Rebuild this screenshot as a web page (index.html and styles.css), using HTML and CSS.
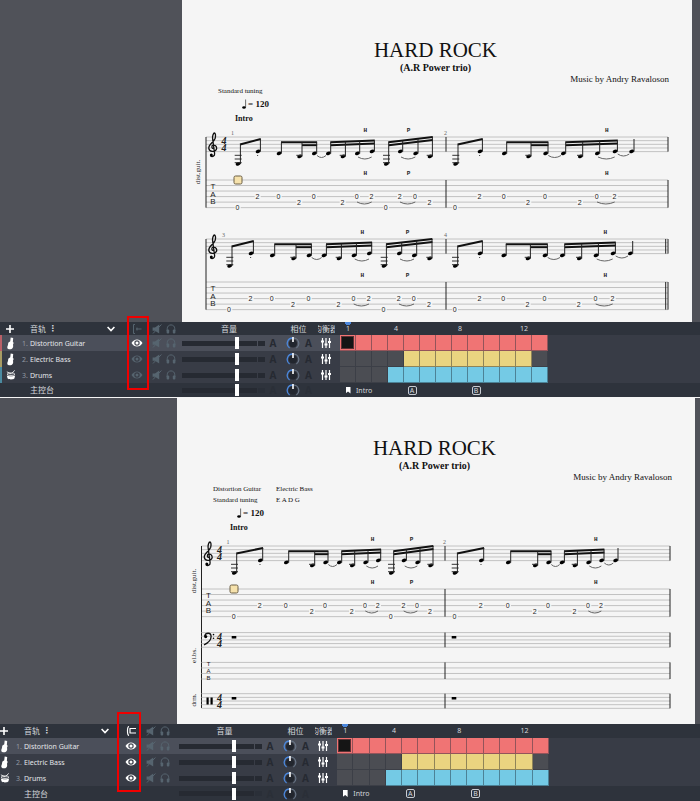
FILE: index.html
```html
<!DOCTYPE html>
<html lang="zh-CN">
<head>
  <meta charset="UTF-8">
  <meta name="viewport" content="width=device-width, initial-scale=1.0">
  <title>HARD ROCK</title>
  <link rel="stylesheet" href="styles.css">
</head>
<body>
  <!-- Icon sprite -->
  <svg class="sprite" aria-hidden="true">
    <symbol id="guitar" viewBox="0 0 10 14">
      <path d="M5.2 .4L8 .9 7.6 5.1C9 6 8.3 7.3 7.7 8.4 8.6 10.8 7.4 13.4 4.3 13.5 1.4 13.5 .8 11.1 2 9.1 2.6 8 2 6.8 3 5.6 3.8 5 4.5 5 4.7 4.4z"/>
    </symbol>
    <symbol id="drums" viewBox="0 0 12 12">
      <path d="M1 6.2C3 7.8 9 7.8 11 6.2L10.2 10C9 11.9 3 11.9 1.8 10z"/>
      <ellipse cx="6" cy="5" rx="4.6" ry="1.5" fill="none" stroke="currentColor"/>
      <path d="M1 2.2L6 4.6M10.5 .5L6.5 4.4" fill="none" stroke="currentColor"/>
    </symbol>
    <symbol id="eye" viewBox="0 0 12 8">
      <path fill-rule="evenodd" d="M.5 4C3.2-.7 8.8-.7 11.5 4 8.8 8.7 3.2 8.7.5 4zM6 1.3A2.7 2.7 0 1 0 6 6.7 2.7 2.7 0 1 0 6 1.3z"/>
      <circle cx="6" cy="4" r="1.5"/>
    </symbol>
    <symbol id="mute" viewBox="0 0 10 10">
      <path d="M.6 3.4H3L7.2.6V9.5L3 6.8H.6z"/>
      <path d="M9.4.5L1 9.5" fill="none" stroke="currentColor"/>
    </symbol>
    <symbol id="phones" viewBox="0 0 10 10">
      <path d="M1.2 7V4.8C1.2-.4 8.8-.4 8.8 4.8V7" fill="none" stroke="currentColor"/>
      <rect x=".6" y="5.5" width="2.6" height="4" rx="1"/>
      <rect x="6.8" y="5.5" width="2.6" height="4" rx="1"/>
    </symbol>
    <symbol id="eq" viewBox="0 0 10 10">
      <path d="M1.5 0V10M5 0V10M8.5 0V10" fill="none" stroke="currentColor" stroke-width="1.2"/>
      <path d="M0 2.5H3V4.5H0zM3.5 5.5H6.5V7.5H3.5zM7 3H10V5H7z"/>
    </symbol>
    <symbol id="knob" viewBox="0 0 14 12">
      <circle cx="7" cy="6.5" r="4" fill="#22262e"/>
      <path d="M3.6 11A5.5 5.5 0 0 1 7 1" fill="none" stroke="#4b87dc" stroke-width="1.3"/>
      <path d="M7 1A5.5 5.5 0 0 1 10.4 11" fill="none" stroke="#687485" stroke-width="1.2"/>
      <path d="M7 0V5" stroke="#fff" stroke-width="1.6"/>
    </symbol>
    <symbol id="single" viewBox="0 0 10 10">
      <path d="M3 .5H1.5V9.5H3M4 5H9.5M5 3.5V6.5" fill="none" stroke="currentColor"/>
    </symbol>
    <symbol id="multi" viewBox="0 0 10 10">
      <path d="M3 .5C1 1 1 9 3 9.5M3.500 2.500H10M3.500 7H10M4 2.500V7" fill="none" stroke="currentColor" stroke-width="1.2"/>
    </symbol>
    <symbol id="plus" viewBox="0 0 8 8">
      <path d="M4 0V8M0 4H8" stroke="currentColor" stroke-width="1.6"/>
    </symbol>
    <symbol id="chevron" viewBox="0 0 8 6">
      <path d="M.6 1L4 4.6 7.4 1" fill="none" stroke="currentColor" stroke-width="1.6"/>
    </symbol>
    <symbol id="quarter" viewBox="0 0 6 10">
      <ellipse cx="2" cy="8.5" rx="1.8" ry="1.2"/>
      <path d="M3.6 8.5V.5" stroke="currentColor" stroke-width=".6"/>
    </symbol>
  </svg>

  <section class="view">
    <div class="workspace">
      <article class="sheet">
        <header class="sheet-header">
          <h1>HARD ROCK</h1>
          <h2>(A.R Power trio)</h2>
          <p class="composer">Music by Andry Ravaloson</p>
          <div class="tunings"><p>Standard tuning</p></div>
          <p class="tempo"><svg class="quarter"><use href="#quarter"/></svg>= 120</p>
          <h3>Intro</h3>
        </header>
        <svg class="system" data-system="first" viewBox="0 0 510 102"></svg>
        <svg class="system" data-system="second" viewBox="0 0 510 97"></svg>
      </article>
    </div>
    <div class="mixer" data-multi="false"></div>
  </section>

  <section class="view view-multi">
    <div class="workspace">
      <article class="sheet">
        <header class="sheet-header">
          <h1>HARD ROCK</h1>
          <h2>(A.R Power trio)</h2>
          <p class="composer">Music by Andry Ravaloson</p>
          <div class="tunings">
            <p>Distortion Guitar</p><p>Electric Bass</p>
            <p>Standard tuning</p><p>E A D G</p>
          </div>
          <p class="tempo"><svg class="quarter"><use href="#quarter"/></svg>= 120</p>
          <h3>Intro</h3>
        </header>
        <svg class="system" data-system="full" viewBox="0 0 518 192"></svg>
      </article>
    </div>
    <div class="mixer" data-multi="true"></div>
  </section>

  <script src="script.js"></script>
</body>
</html>
```

FILE: styles.css
```css
:root {
  --workspace: #505259;
  --sheet: #f5f5f5;
  --bar: #2e333c;
  --row: #383c46;
  --row-active: #4b4f5a;
  --slot: #4b4d53;
  --red: #f07474;
  --yellow: #ead480;
  --blue: #74cae5;
  --muted: #56646f;
  --ui-text: #d5d8dc;
}

* {
  box-sizing: border-box;
  margin: 0;
  padding: 0;
}

body {
  background: var(--sheet);
  font-family: "Noto Sans", "Noto Sans CJK SC", sans-serif;
}

button {
  display: flex;
  align-items: center;
  justify-content: center;
  border: none;
  background: none;
  color: inherit;
  font: inherit;
}

.sprite {
  display: none;
}

/* Score */
.view {
  padding-bottom: 1px;
}

.view-multi {
  padding-bottom: 0;
}

.workspace {
  padding: 0 8px 0 182px;
  background: var(--workspace);
}

.view-multi .workspace {
  padding: 0 5px 0 177px;
}

.sheet {
  background: var(--sheet);
  color: #111;
  font-family: "Liberation Serif", serif;
}

.sheet-header {
  padding: 38px 23px 0 20px;
}

.sheet-header h1 {
  font-size: 21px;
  font-weight: normal;
  line-height: 24px;
  text-align: center;
}

.sheet-header h2 {
  font-size: 10px;
  line-height: 12px;
  text-align: center;
}

.composer {
  font-size: 9px;
  line-height: 10px;
  text-align: right;
}

.tunings {
  display: grid;
  grid-template-columns: 63px 1fr;
  margin: 2px 0 0 16px;
  font-size: 7px;
  line-height: 11px;
}

.tempo {
  display: flex;
  margin-left: 40px;
  padding-top: 2px;
  font-size: 9px;
  font-weight: bold;
  line-height: 10px;
}

.quarter {
  width: 6px;
  height: 10px;
}

.sheet-header h3 {
  margin-left: 33px;
  padding-top: 6px;
  font-size: 8px;
  line-height: 8px;
}

.system {
  display: block;
  width: 100%;
}

.system text {
  font-family: "Liberation Serif", serif;
  font-size: 7px;
  fill: #222;
}

.system .digit,
.system .tab-letter {
  font-family: "Liberation Sans", sans-serif;
  text-anchor: middle;
}

.system .tab-letter {
  font-size: 8px;
}

.system .tab-letter.small {
  font-size: 6px;
}

.system .meter {
  font-size: 10px;
  font-style: italic;
  font-weight: bold;
  text-anchor: middle;
}

.system .technique {
  font-family: "Liberation Mono", monospace;
  font-size: 6px;
  font-weight: bold;
  text-anchor: middle;
}

.system .number {
  font-size: 6px;
  fill: #666;
}

.system .label {
  text-anchor: middle;
}

.staff-line {
  stroke: #c2c2c2;
  stroke-width: 1;
}

.bar-line,
.stem {
  stroke: #222;
  stroke-width: 1;
}

.beam {
  stroke: #111;
  stroke-width: 2;
}

.ledger {
  stroke: #333;
  stroke-width: 1;
}

.tie {
  fill: none;
  stroke: #666;
  stroke-width: 1;
}

.clef {
  fill: none;
  stroke: #111;
  stroke-width: 1.3;
}

/* Mixer */
.mixer {
  position: relative;
  display: flex;
  background: var(--row);
  color: var(--ui-text);
  font-size: 7px;
}

.channels {
  flex: none;
  width: 340px;
}

.view-multi .channels {
  width: 343px;
  margin-left: -6px;
}

.channel {
  display: grid;
  grid-template-columns: 19px 105px 26px 13px 16px 1fr 16px 24px 7px 28px;
  align-items: center;
  height: 16px;
  background: var(--row);
}

.channel > * {
  justify-self: center;
}

.channel.active {
  background: var(--row-active);
}

.channel.head,
.ruler {
  height: 13px;
  background: var(--bar);
}

.view-multi .channel.head,
.view-multi .ruler {
  height: 14px;
}

.channel.master,
.markers {
  height: 14px;
  background: var(--bar);
}

.view-multi .channel.master,
.view-multi .markers {
  height: 15px;
}

.channel .instrument {
  display: flex;
  align-items: center;
  justify-content: center;
  justify-self: stretch;
  height: 100%;
  border-left: 2px solid var(--bar);
  color: #fff;
}

.instrument.red { border-color: #b96068; }
.instrument.yellow { border-color: #a99c63; }
.instrument.blue { border-color: #4b8ba1; }

.channel .name {
  display: flex;
  align-items: center;
  justify-self: stretch;
  padding-left: 3px;
}

.name .index {
  width: 8px;
  color: #949aa3;
}

.name .title {
  color: #e4e6e9;
}

.channel .name.cjk,
.head-label {
  font-size: 8px;
  line-height: 12px;
}

.channel .name.cjk {
  padding: 0 9px 0 11px;
}

.name .more {
  margin: 0 auto 0 3px;
  font-family: "DejaVu Sans", sans-serif;
  font-weight: bold;
}

.icon {
  display: block;
  width: 10px;
  height: 10px;
  fill: currentColor;
}

.icon.guitar {
  width: 9px;
  height: 13px;
}

.icon.eye {
  width: 12px;
  height: 8px;
}

.icon.knob {
  width: 14px;
  height: 12px;
}

.icon.plus,
.icon.chevron {
  width: 8px;
  height: 8px;
}

.muted {
  color: var(--muted);
}

.lit {
  color: #fff;
}

.channel .volume {
  display: flex;
  align-items: center;
  justify-self: end;
  gap: 1px;
  width: 83px;
}

.volume input {
  width: 75px;
  height: 12px;
  appearance: none;
  background: linear-gradient(#262a32, #262a32) center / 100% 5px no-repeat;
}

.volume input::-webkit-slider-thumb {
  appearance: none;
  width: 4px;
  height: 12px;
  background: #fff;
}

.volume .peak {
  width: 7px;
  height: 5px;
  background: #262a32;
}

.auto {
  color: #262a32;
  font-size: 10px;
  font-weight: bold;
  line-height: 12px;
}

.master .auto,
.master .peak {
  opacity: 0.4;
}

.head-label.level {
  padding-left: 14px;
}

.head-label.pan {
  grid-column: 8 / 10;
  padding-left: 4px;
  white-space: nowrap;
}

.head-label.eq-label {
  display: flex;
  justify-content: center;
  width: 17px;
  overflow: hidden;
  white-space: nowrap;
}

/* Timeline */
.timeline {
  flex: 1;
  min-width: 0;
  --bars-width: 208px;
}

.view-multi .timeline {
  --bars-width: 212px;
}

.ruler,
.markers,
.bars {
  display: grid;
  grid-template-columns: repeat(13, calc(var(--bars-width) / 13));
  align-items: center;
}

.ruler span {
  height: 100%;
  line-height: 13px;
  text-align: center;
}

/* Playhead */
.ruler span:first-child {
  background: radial-gradient(circle at top, #4b87dc 3px, transparent 3px);
}

.bars {
  height: 16px;
  align-items: stretch;
}

.bars span {
  border: solid #3c3f47;
  border-width: 0 1px 1px 0;
  background: var(--slot);
}

.bars.red .on { background: var(--red); border-color: #93545a; }
.bars.yellow .on { background: var(--yellow); border-color: #8f8458; }
.bars.blue .on { background: var(--blue); border-color: #4c8296; }

.bars .current {
  display: flex;
  align-items: center;
  justify-content: center;
}

.bars .current::before {
  content: "";
  width: 11px;
  height: 11px;
  border: 1px solid #5c3033;
  background: #151515;
}

.markers {
  justify-items: center;
}

.markers .flag {
  width: 5px;
  height: 7px;
  background: #fff;
  clip-path: polygon(0 0, 100% 0, 100% 100%, 50% 70%, 0 100%);
}

.markers .section {
  grid-column: 2 / 4;
  justify-self: start;
}

.markers .letter {
  width: 9px;
  height: 9px;
  border: 1px solid #c8ccd2;
  border-radius: 2px;
  line-height: 7px;
  text-align: center;
}

.markers .letter.a { grid-column: 5; }
.markers .letter.b { grid-column: 9; }

/* Red frame laid over the visibility column */
.highlight {
  position: absolute;
  top: -6px;
  left: 127px;
  width: 22px;
  height: 74px;
  border: 2px solid #f00000;
  pointer-events: none;
}

.view-multi .highlight {
  top: -12px;
  left: 117px;
  width: 24px;
  height: 80px;
}
```

FILE: script.js
```js
const LINE = 3.66;   // gap between staff lines
const TAB_LINE = 5.53; // gap between tab lines
const TOP = 14;      // first staff line
const TAB = 43;      // tab offset from the first staff line

// Heads: [height below the first staff line, tab row, fret]
const LOW = [27, 5, 0];
const MID = [14.6, 3, 2];
const OPEN = [16.6, 3, 0];
const DOWN = [19.6, 4, 2];
const TIED = [16.6];
const END = [14.6];
const RIFF = [LOW, MID, OPEN, DOWN, OPEN, TIED, DOWN, OPEN, MID, LOW, MID, OPEN, DOWN];
const RIFF_END = [LOW, MID, OPEN, DOWN, OPEN, TIED, DOWN, OPEN, MID, END];

const systems = {
  first: {
    left: 24, bars: [264, 486], number: 1, meter: true, cursor: 56, label: true,
    measures: [
      [55.7, 75.7, 96.7, 117.3, 132, 146, 160.7, 175, 189.7, 204, 218, 233.3, 247.7],
      [273.3, 297.7, 322, 346.3, 363.3, 381, 398, 415, 432.7, 449.3]
    ]
  },
  second: {
    left: 24, bars: [264, 486], number: 3, double: true,
    measures: [
      [47.3, 68.7, 90, 111.3, 126.7, 141.7, 156.7, 171.7, 187, 201.7, 217, 232, 247.3],
      [273, 297.7, 321.5, 345.7, 362.7, 380, 397, 413.7, 430.7, 448]
    ]
  },
  full: {
    left: 24.5, bars: [268, 493], number: 1, meter: true, cursor: 57, label: true, band: true,
    measures: [
      [57, 83, 109, 135, 148.3, 162, 175, 188.3, 201, 214, 226.7, 240.3, 253.3],
      [277.7, 304, 331, 358, 371.3, 384.7, 397.7, 411.3, 424.3, 438.3]
    ]
  }
};

function line(cls, x1, y1, x2, y2) {
  return `<line class="${cls}" x1="${x1}" y1="${y1}" x2="${x2}" y2="${y2}"/>`;
}

function text(cls, x, y, value) {
  return `<text class="${cls}" x="${x}" y="${y}">${value}</text>`;
}

function staff(s, y, count, gap) {
  let out = '';
  for (let i = 0; i < count; i++) {
    const ly = y + i * gap;
    out += line('staff-line', s.left, ly, s.bars[1], ly);
  }
  const end = y + (count - 1) * gap;
  s.bars.forEach(x => out += line('bar-line', x, y, x, end));
  if (s.double) out += line('bar-line', s.bars[1] - 2.3, y, s.bars[1] - 2.3, end);
  return out;
}

function tie(x1, x2, y) {
  return `<path class="tie" d="M${x1} ${y}Q${(x1 + x2) / 2} ${y + 4} ${x2} ${y}"/>`;
}

// Beam from stem a to stem b, with the stems between them
function beamGroup(xs, notes, a, b, y1, y2, secondFrom) {
  const start = xs[a] + 2.7;
  const end = xs[b] + 2.7;
  const at = x => TOP + y1 + (y2 - y1) * (x - start) / (end - start);
  let out = line('beam', start - 0.4, at(start), end + 0.4, at(end));
  if (secondFrom !== undefined) {
    const x = xs[secondFrom] + 2.7;
    out += line('beam', x, at(x) + 2.9, end + 0.4, at(end) + 2.9);
  }
  for (let i = a; i <= b; i++) {
    const x = xs[i] + 2.7;
    out += line('stem', x, at(x), x, TOP + notes[i][0]);
  }
  return out;
}

function measure(xs, notes) {
  let out = '';
  notes.forEach(([height, row, fret], i) => {
    const x = xs[i];
    const y = TOP + height;
    out += `<ellipse cx="${x + 0.4}" cy="${y}" rx="2.5" ry="1.7" transform="rotate(-20 ${x} ${y})"/>`;
    if (height === 27) {
      [18.3, 22, 25.7].forEach(l => out += line('ledger', x - 3, TOP + l, x + 4, TOP + l));
    }
    if (height === 19.6) out += line('ledger', x - 3, TOP + 18.3, x + 3, TOP + 18.3);
    if (row !== undefined) {
      const ty = TOP + TAB + row * TAB_LINE;
      out += `<rect x="${x - 3}" y="${ty - 2}" width="6" height="4" fill="#f5f5f5"/>`;
      out += text('digit', x - 0.3, ty + 2.5, fret);
    }
  });
  out += `<circle cx="${xs[1]}" cy="${TOP + 18.6}" r=".5"/>`;
  out += beamGroup(xs, notes, 0, 1, 7.5, 2);
  out += beamGroup(xs, notes, 2, 4, 5.3, 5.3, 3);
  out += beamGroup(xs, notes, 5, 8, 5.3, 3.6, 5);
  out += tie(xs[4] + 3, xs[5] - 2, TOP + 18.5);
  out += tie(xs[7] + 1, xs[8], TOP + 20);
  out += tie(xs[7], xs[8], TOP + 65);
  out += techniques((xs[7] + xs[8]) / 2 + 1, 'H');
  if (notes.length > 10) {
    out += beamGroup(xs, notes, 9, 12, 5.3, 0, 9);
    out += tie(xs[10] + 1, xs[11], TOP + 20);
    out += tie(xs[10], xs[11], TOP + 65);
    out += techniques((xs[10] + xs[11]) / 2 + 1, 'P');
  } else {
    out += line('stem', xs[9] + 2.7, TOP + 2, xs[9] + 2.7, TOP + 14.6);
    out += tie(xs[8] + 3, xs[9] - 2, TOP + 17);
  }
  return out;
}

function techniques(x, letter) {
  return text('technique', x, TOP - 4.6, letter) + text('technique', x, TOP + 38.4, letter);
}

function trebleClef(x, y) {
  return `<g transform="translate(${x} ${y})">
    <path class="clef" d="M.9 11.6C-1.6 11.8-1.9 8.6 .3 8.2 3.2 7.8 4.3 11 3.3 12.7 1.8 15.2-3.6 15-4.2 11.3-4.7 7.4 .9 5.2 2.2 1.2 2.9-1.5 2.4-3.8 1.5-4 .2-4-.7-.6-.4 1.6L1.6 16.5C2 19-.8 20.4-2.4 18.8"/>
    <circle cx="-1.7" cy="18" r="1.5"/>
  </g>`;
}

function bassClef(x, y) {
  return `<g transform="translate(${x} ${y})">
    <path class="clef" d="M-3.8 3.5C-3-.2 2.6-.6 2.6 4 2.6 8-.5 10.5-4.5 12.3"/>
    <circle cx="-2.8" cy="4" r="1.6"/><circle cx="5" cy="2" r=".8"/><circle cx="5" cy="5.6" r=".8"/>
  </g>`;
}

function meter(x, y) {
  return text('meter', x, y + 7, 4) + text('meter', x, y + 14.4, 4);
}

function label(x, y, value) {
  return `<text class="label" transform="translate(${x} ${y}) rotate(-90)">${value}</text>`;
}

function drawSystem(s) {
  const x = s.left;
  const tabEnd = TOP + TAB + 5 * TAB_LINE;
  let out = staff(s, TOP, 5, LINE) + staff(s, TOP + TAB, 6, TAB_LINE);
  out += line('bar-line', x, TOP, x, s.band ? 176 : tabEnd);
  out += trebleClef(x + 7, TOP);
  ['T', 'A', 'B'].forEach((l, i) => out += text('tab-letter', x + 7, TOP + 52 + i * 7.6, l));
  out += text('number', s.meter ? x + 25 : x + 16, TOP - 2, s.number);
  out += text('number', s.bars[0] - 2, TOP - 2, s.number + 1);
  if (s.meter) out += meter(x + 18, TOP);
  if (s.label) out += label(x - 6, TOP + 35, 'dist.guit.');
  out += measure(s.measures[0], RIFF) + measure(s.measures[1], RIFF_END);
  if (s.cursor) {
    out += `<rect x="${s.cursor - 4}" y="${TOP + TAB - 4}" width="8" height="8" rx="1.5" fill="#f6e2ac" stroke="#6b5e45"/>`;
  }
  if (s.band) {
    out += staff(s, 100.6, 5, LINE) + staff(s, 130.4, 4, TAB_LINE) + staff(s, 161.7, 5, LINE);
    out += bassClef(x + 7, 100.6) + meter(x + 18, 100.6) + meter(x + 18, 161.7);
    ['T', 'A', 'B'].forEach((l, i) => out += text('tab-letter small', x + 7, 134 + i * 7, l));
    out += `<path d="M${x + 5} 165.5h2.2v7h-2.2zM${x + 9} 165.5h2.2v7h-2.2z"/>`;
    [57, 277].forEach(r => {
      out += `<path d="M${r - 2.3} 104h4.600v2.500h-4.600zM${r - 2.3} 165h4.600v2.500h-4.600z"/>`;
    });
    out += label(x - 6, 123.5, 'el.bs.') + label(x - 6, 168, 'drm.');
  }
  return out;
}

function icon(name) {
  return `<svg class="icon ${name}" aria-hidden="true"><use href="#${name}"/></svg>`;
}

const tracks = [
  { name: 'Distortion Guitar', icon: 'guitar', color: 'red', from: 1, to: 13 },
  { name: 'Electric Bass', icon: 'guitar', color: 'yellow', from: 5, to: 12 },
  { name: 'Drums', icon: 'drums', color: 'blue', from: 4, to: 13 }
];

function levels(name) {
  return `<div class="volume"><input type="range" value="74" aria-label="${name} 音量"><span class="peak"></span></div>
    <button class="auto">A</button>
    <button aria-label="${name} 相位">${icon('knob')}</button>
    <button class="auto">A</button>`;
}

function channel(track, i, multi) {
  const visible = multi || i === 0;
  return `<div class="channel ${i === 0 ? 'active' : ''}">
    <span class="instrument ${track.color}">${icon(track.icon)}</span>
    <div class="name"><span class="index">${i + 1}.</span><span class="title">${track.name}</span></div>
    <button class="${visible ? 'lit' : 'muted'}" aria-label="${track.name}">${icon('eye')}</button>
    <button class="muted" aria-label="Mute">${icon('mute')}</button>
    <button class="muted" aria-label="Solo">${icon('phones')}</button>
    ${levels(track.name)}
    <button class="lit" aria-label="均衡器">${icon('eq')}</button>
  </div>`;
}

function bars(track, i) {
  let out = '';
  for (let n = 1; n <= 13; n++) {
    const on = n >= track.from && n <= track.to;
    out += `<span class="${on ? 'on' : ''} ${i === 0 && n === 1 ? 'current' : ''}"></span>`;
  }
  return `<div class="bars ${track.color}">${out}</div>`;
}

function drawMixer(multi) {
  let ruler = '';
  for (let n = 1; n <= 13; n++) {
    ruler += `<span>${n === 1 || n % 4 === 0 ? n : ''}</span>`;
  }
  return `<div class="channels">
      <div class="channel head">
        <button class="lit" aria-label="Add">${icon('plus')}</button>
        <div class="name cjk">音轨<span class="more">⋮</span><button class="lit" aria-label="Expand">${icon('chevron')}</button></div>
        <button class="${multi ? 'lit' : 'muted'}" aria-label="Multitrack">${icon(multi ? 'multi' : 'single')}</button>
        <span class="muted">${icon('mute')}</span>
        <span class="muted">${icon('phones')}</span>
        <span class="head-label level">音量</span>
        <span></span>
        <span class="head-label pan">相位</span>
        <span class="head-label eq-label">均衡器</span>
      </div>
      ${tracks.map((t, i) => channel(t, i, multi)).join('')}
      <div class="channel master">
        <span></span>
        <div class="name cjk">主控台</div>
        <span></span><span></span><span></span>
        ${levels('主控台')}
      </div>
    </div>
    <div class="timeline">
      <div class="ruler">${ruler}</div>
      ${tracks.map(bars).join('')}
      <div class="markers">
        <span class="flag"></span><span class="section">Intro</span>
        <span class="letter a">A</span><span class="letter b">B</span>
      </div>
    </div>
    <div class="highlight"></div>`;
}

document.querySelectorAll('.system').forEach(el => {
  el.innerHTML = drawSystem(systems[el.dataset.system]);
});

document.querySelectorAll('.mixer').forEach(el => {
  el.innerHTML = drawMixer(el.dataset.multi === 'true');
});
```
